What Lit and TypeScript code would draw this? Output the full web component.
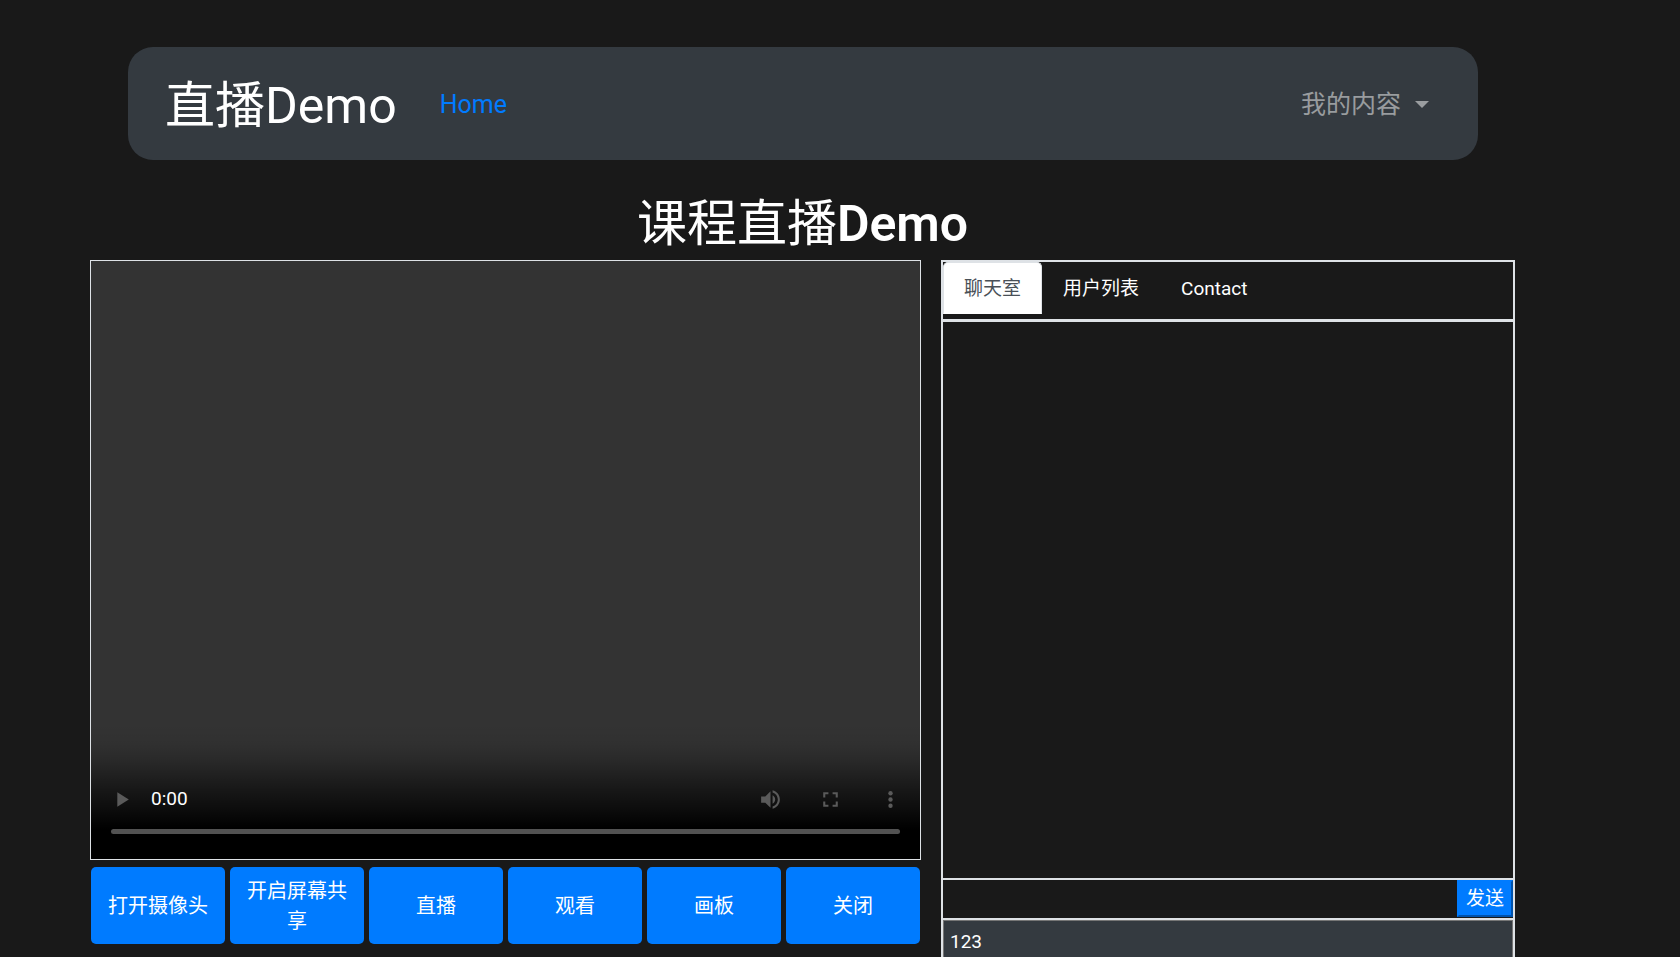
import { LitElement, html, css } from "lit";
import { customElement, state } from "lit/decorators.js";

const ACTIONS = ["打开摄像头", "开启屏幕共享", "直播", "观看", "画板", "关闭"];
const TABS = ["聊天室", "用户列表", "Contact"];

@customElement("live-navbar")
export class LiveNavbar extends LitElement {
  static styles = css`
    :host {
      display: block;
    }
    .bar {
      display: flex;
      align-items: center;
      box-sizing: border-box;
      padding: 20px 49px 18px 37px;
      border-radius: 25px;
      background: #343a40;
      font-size: 25px;
      line-height: 38px;
    }
    a {
      text-decoration: none;
    }
    .brand {
      padding-top: 4px;
      color: #fff;
      font-size: 50px;
      line-height: 71px;
    }
    .home {
      margin-left: 43px;
      color: #007bff;
    }
    .menu {
      display: flex;
      align-items: center;
      gap: 14px;
      margin-left: auto;
      padding: 0;
      border: 0;
      background: none;
      color: rgba(255, 255, 255, 0.5);
      font: inherit;
      cursor: pointer;
    }
    .caret {
      border-top: 7px solid;
      border-right: 7px solid transparent;
      border-left: 7px solid transparent;
    }
  `;

  render() {
    return html`
      <nav class="bar">
        <a class="brand" href="#">直播Demo</a>
        <a class="home" href="#">Home</a>
        <button class="menu" type="button" aria-haspopup="true">
          我的内容<span class="caret"></span>
        </button>
      </nav>
    `;
  }
}

@customElement("live-player")
export class LivePlayer extends LitElement {
  static styles = css`
    :host {
      display: flex;
      flex-direction: column;
      justify-content: flex-end;
      box-sizing: border-box;
      height: 600px;
      border: 1px solid #dee2e6;
      background: linear-gradient(
          to top,
          #000 30px,
          rgba(0, 0, 0, 0.82) 45px,
          rgba(0, 0, 0, 0.56) 68px,
          rgba(0, 0, 0, 0.2) 98px,
          rgba(0, 0, 0, 0.06) 115px,
          transparent 135px
        )
        #333;
    }
    .controls {
      display: flex;
      align-items: center;
      height: 40px;
    }
    .control {
      display: flex;
      align-items: center;
      justify-content: center;
      width: 60px;
      height: 40px;
      padding: 0;
      border: 0;
      background: none;
      color: #5a5a5a;
    }
    svg {
      width: 25px;
      height: 25px;
      fill: currentColor;
    }
    .time {
      margin-right: auto;
      color: #fff;
      font-size: 19px;
      line-height: 30px;
    }
    .seek {
      appearance: none;
      display: block;
      height: 5px;
      margin: 10px 20px 25px;
      border-radius: 3px;
      background: #525252;
    }
    .seek::-webkit-slider-thumb {
      appearance: none;
      width: 0;
      height: 0;
    }
  `;

  render() {
    return html`
      <div class="controls">
        <button class="control" type="button" aria-label="播放">
          <svg viewBox="0 0 24 24"><path d="M8 5v14l11-7z" /></svg>
        </button>
        <span class="time">0:00</span>
        <button class="control" type="button" aria-label="静音">
          <svg viewBox="0 0 24 24">
            <path
              d="M3 9v6h4l5 5V4L7 9H3zm13.5 3c0-1.77-1.02-3.29-2.5-4.03v8.05c1.48-.73 2.5-2.25 2.5-4.02zM14 3.23v2.06c2.89.86 5 3.54 5 6.71s-2.11 5.85-5 6.71v2.06c4.01-.91 7-4.49 7-8.77s-2.99-7.86-7-8.77z"
            />
          </svg>
        </button>
        <button class="control" type="button" aria-label="全屏">
          <svg viewBox="0 0 24 24">
            <path d="M7 14H5v5h5v-2H7v-3zm-2-4h2V7h3V5H5v5zm12 7h-3v2h5v-5h-2v3zM14 5v2h3v3h2V5h-5z" />
          </svg>
        </button>
        <button class="control" type="button" aria-label="更多">
          <svg viewBox="0 0 24 24">
            <circle cx="12" cy="6" r="2.1" />
            <circle cx="12" cy="12" r="2.1" />
            <circle cx="12" cy="18" r="2.1" />
          </svg>
        </button>
      </div>
      <input class="seek" type="range" min="0" max="100" value="0" aria-label="进度" />
    `;
  }
}

@customElement("live-chat")
export class LiveChat extends LitElement {
  static styles = css`
    :host {
      display: block;
      box-sizing: border-box;
      border: 2px solid #dee2e6;
      font-size: 19px;
      line-height: 30px;
    }
    .tabs {
      display: flex;
      padding-bottom: 5px;
      border-bottom: 3px solid #dee2e6;
    }
    .tab {
      padding: 11px 20px 9px;
      border: 1px solid transparent;
      border-radius: 5px 5px 0 0;
      background: none;
      color: #fff;
      font: inherit;
      cursor: pointer;
    }
    .tab[aria-selected="true"] {
      border-color: #dee2e6 #dee2e6 #fff;
      background: #fff;
      color: #495057;
    }
    .messages {
      height: 556px;
      border-bottom: 2px solid #dee2e6;
    }
    .composer {
      display: flex;
      align-items: flex-start;
      height: 38px;
      border-bottom: 2px solid #dee2e6;
    }
    .entry {
      flex: 1;
      min-width: 0;
      align-self: stretch;
      padding: 0 8px;
      border: 0;
      outline: 0;
      background: transparent;
      color: #fff;
      font: inherit;
    }
    .send {
      box-sizing: border-box;
      height: 37px;
      padding: 0 7px;
      border: 2px outset #007bff;
      background: #007bff;
      color: #fff;
      font: inherit;
      cursor: pointer;
    }
    .log {
      display: block;
      box-sizing: border-box;
      width: 100%;
      height: 120px;
      padding: 6px;
      border: 1px solid #767676;
      outline: 0;
      resize: none;
      background: #343a40;
      color: #fff;
      font: inherit;
    }
  `;

  @state() private active = 0;

  render() {
    return html`
      <div class="tabs" role="tablist">
        ${TABS.map(
          (tab, i) => html`<button
            class="tab"
            type="button"
            role="tab"
            aria-selected=${i === this.active ? "true" : "false"}
            @click=${() => (this.active = i)}
          >${tab}</button>`
        )}
      </div>
      <div class="messages"></div>
      <div class="composer">
        <input class="entry" type="text" aria-label="消息" />
        <button class="send" type="button">发送</button>
      </div>
      <textarea class="log" aria-label="记录" .value=${"123"}></textarea>
    `;
  }
}

@customElement("app-root")
export class AppRoot extends LitElement {
  static styles = css`
    :host {
      display: block;
      box-sizing: border-box;
      height: 100vh;
      overflow: hidden;
      padding: 47px 165px 0 90px;
      background: #191919;
      color: #fff;
      font-family: Roboto, "Noto Sans CJK SC", sans-serif;
    }
    .navbar {
      margin: 0 37px 0 38px;
    }
    .title {
      margin: 34px 0 6px;
      font-size: 50px;
      font-weight: 400;
      line-height: 60px;
      text-align: center;
    }
    .latin {
      font-weight: 600;
    }
    .columns {
      display: grid;
      grid-template-columns: 831fr 574fr;
      align-items: start;
      gap: 20px;
    }
    .actions {
      display: grid;
      grid-template-columns: repeat(6, 1fr);
      gap: 5px;
      margin: 7px 1px 0;
    }
    .action {
      min-height: 77px;
      padding: 8px 14px;
      border: 0;
      border-radius: 5px;
      background: #007bff;
      color: #fff;
      font: inherit;
      font-size: 20px;
      line-height: 30px;
      cursor: pointer;
    }
  `;

  render() {
    return html`
      <live-navbar class="navbar"></live-navbar>
      <h1 class="title">课程直播<span class="latin">Demo</span></h1>
      <main class="columns">
        <section>
          <live-player></live-player>
          <div class="actions">
            ${ACTIONS.map((name) => html`<button class="action" type="button">${name}</button>`)}
          </div>
        </section>
        <live-chat></live-chat>
      </main>
    `;
  }
}
